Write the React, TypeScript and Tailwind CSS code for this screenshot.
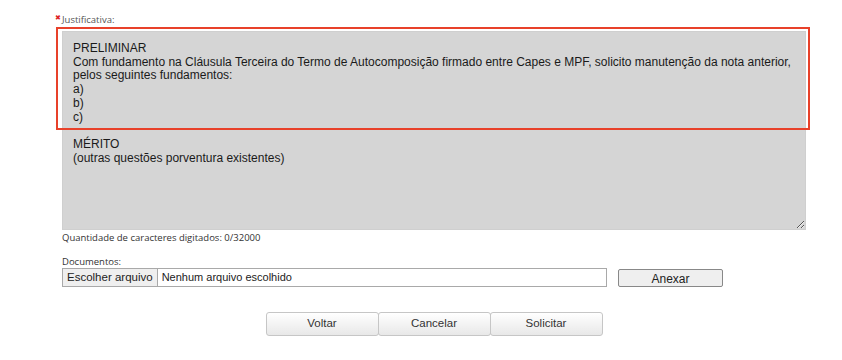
import React from 'react';

const textoPadrao = `PRELIMINAR
Com fundamento na Cláusula Terceira do Termo de Autocomposição firmado entre Capes e MPF, solicito manutenção da nota anterior,
pelos seguintes fundamentos:
a)
b)
c)

MÉRITO
(outras questões porventura existentes)`;

const arial = { fontFamily: '"Liberation Sans", Arial, sans-serif' };

function BotaoAcao({ label, last }: { label: string; last?: boolean }) {
    return (
        <button
            className={`w-[113px] h-[24px] text-[11.5px] text-[#333] border border-[#c6c6c6] rounded-[3px] bg-gradient-to-b from-white to-[#e8e8e8] ${last ? '' : '-mr-px'}`}
            style={arial}
        >
            {label}
        </button>
    );
}

export default function App() {
    return (
        <div className="relative w-[842px] h-[360px] bg-white overflow-hidden">
            <div className="pl-[62px] pr-[36px] pt-[14px]" style={{ fontFamily: '"Open Sans", sans-serif' }}>
                {/* Justificativa */}
                <div className="relative h-[12px] leading-[12px] text-[9.5px] text-[#555]">
                    <span className="absolute -left-[7px] top-[-2px] text-[7px] text-[#d22]">✖</span>
                    Justificativa:
                </div>
                <textarea
                    readOnly
                    defaultValue={textoPadrao}
                    className="block mt-[5px] w-[744px] h-[199px] px-[10px] pt-[10px] bg-[#d5d5d5] border border-[#cfcfcf] text-[12px] leading-[13.7px] text-[#1a1a1a] outline-none resize"
                    style={arial}
                />
                <div className="mt-[2px] h-[12px] leading-[12px] text-[9.5px] text-[#333]">
                    Quantidade de caracteres digitados: 0/32000
                </div>

                {/* Documentos */}
                <div className="mt-[12px] h-[12px] leading-[12px] text-[9.5px] text-[#333]">Documentos:</div>
                <div className="flex items-center gap-[11px]">
                    <div className="flex items-center w-[545px] h-[19px] border border-[#a9a9a9] bg-white" style={arial}>
                        <span className="h-full px-[4px] flex items-center bg-[#efefef] border-r border-[#a9a9a9] text-[11.5px] text-[#222]">
                            Escolher arquivo
                        </span>
                        <span className="pl-[4px] text-[11px] text-[#222]">Nenhum arquivo escolhido</span>
                    </div>
                    <button
                        className="w-[105px] h-[18px] border border-[#888] rounded-[2px] bg-[#efefef] text-[12px] text-[#222]"
                        style={arial}
                    >
                        Anexar
                    </button>
                </div>

                {/* Ações */}
                <div className="mt-[25px] w-[744px] flex justify-center">
                    <BotaoAcao label="Voltar" />
                    <BotaoAcao label="Cancelar" />
                    <BotaoAcao label="Solicitar" last />
                </div>
            </div>

            {/* destaque */}
            <div className="absolute left-[56px] top-[27px] w-[754px] h-[103px] border-2 border-[#e8412a] pointer-events-none" />
        </div>
    );
}
